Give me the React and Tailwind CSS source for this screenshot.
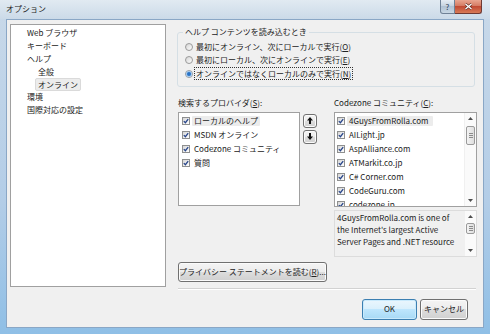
import React from 'react';

const btn = "border border-[#707070] rounded-[3px] bg-[linear-gradient(to_bottom,#f4f4f4_0%,#ececec_50%,#dddddd_50%,#d0d0d0_100%)] shadow-[inset_0_0_0_1px_#fbfbfb] flex items-center justify-center";

const providers = ['ローカルのヘルプ', 'MSDN オンライン', 'Codezone コミュニティ', '質問'];
const community = ['4GuysFromRolla.com', 'AILight.jp', 'AspAlliance.com', 'ATMarkit.co.jp', 'C# Corner.com', 'CodeGuru.com', 'codezone.jp'];

function Check() {
  return (
    <span className="w-[8px] h-[8px] border border-[#8e8f8f] bg-[linear-gradient(135deg,#d6d6d6,#ffffff)] flex items-center justify-center shrink-0">
      <svg width="6" height="6" viewBox="0 0 6 6">
        <path d="M0.8 3.1 L2.4 4.7 L5.2 1.1" stroke="#27458a" strokeWidth="1.3" fill="none" />
      </svg>
    </span>
  );
}

function Radio({ on }) {
  return (
    <span className="w-[8px] h-[8px] rounded-full border border-[#9a9a9a] bg-[linear-gradient(135deg,#d4d4d4,#ffffff)] flex items-center justify-center shrink-0">
      {on && <span className="w-[4px] h-[4px] rounded-full bg-[#2a73c6] shadow-[0_0_1px_1px_#9cc6ee]" />}
    </span>
  );
}

function Arrow({ up }) {
  return (
    <svg width="5" height="3" viewBox="0 0 5 3">
      <path d={up ? 'M0 3 L2.5 0 L5 3 Z' : 'M0 0 L2.5 3 L5 0 Z'} fill="#4d4d4d" />
    </svg>
  );
}

function ScrollBar({ thumbTop, thumbH }) {
  return (
    <div className="w-[12px] h-full flex flex-col items-center bg-[#fafafa] border-l border-[#f0f0f0] shrink-0">
      <div className="h-[11px] flex items-center justify-center"><Arrow up /></div>
      <div className="flex-1 w-full px-[1px]" style={{ paddingTop: thumbTop }}>
        <div className="w-full border border-[#9a9a9a] rounded-[2px] bg-[linear-gradient(to_right,#f3f3f3,#dedede)] flex flex-col items-center justify-center gap-[1px]" style={{ height: thumbH }}>
          <span className="w-[4px] h-px bg-[#8a8a8a]" />
          <span className="w-[4px] h-px bg-[#8a8a8a]" />
          <span className="w-[4px] h-px bg-[#8a8a8a]" />
        </div>
      </div>
      <div className="h-[11px] flex items-center justify-center"><Arrow /></div>
    </div>
  );
}

function MoveBtn({ up }) {
  return (
    <div className={`${btn} w-[14px] h-[14px]`}>
      <svg width="6" height="7" viewBox="0 0 6 7">
        {up
          ? <path d="M3 0 L6 3.5 L4 3.5 L4 7 L2 7 L2 3.5 L0 3.5 Z" fill="#111" />
          : <path d="M3 7 L6 3.5 L4 3.5 L4 0 L2 0 L2 3.5 L0 3.5 Z" fill="#111" />}
      </svg>
    </div>
  );
}

export default function App() {
  const tree = [
    { label: 'Web ブラウザ', pad: 'w-[14px]' },
    { label: 'キーボード', pad: 'w-[14px]' },
    { label: 'ヘルプ', pad: 'w-[14px]' },
    { label: '全般', pad: 'w-[25px]' },
    { label: 'オンライン', pad: 'w-[25px]', selected: true },
    { label: '環境', pad: 'w-[14px]' },
    { label: '国際対応の設定', pad: 'w-[14px]' },
  ];

  return (
    <div className="w-[490px] h-[334px] flex flex-col overflow-hidden bg-[linear-gradient(to_bottom,#c9d9e9,#b3cde7_60%,#8fbfe6)] font-['Noto_Sans_CJK_JP','Noto_Sans',sans-serif] text-[8px] leading-[12px] text-[#222]">
      {/* Title bar */}
      <div className="h-[19px] flex items-start bg-[linear-gradient(to_bottom,#e1eaf2,#cbdae8)] shrink-0">
        <span className="ml-[6px] mt-[3px] text-[#1a1a1a]">オプション</span>
        <div className="ml-auto mr-[8px] flex">
          <div className="w-[15px] h-[14px] border border-[#6f8196] border-t-0 rounded-bl-[3px] bg-[linear-gradient(to_bottom,#e6edf4,#c3d1df_50%,#b0c2d4_50%,#c8d7e4)] flex items-center justify-center text-[8px] text-[#2c3e55]">?</div>
          <div className="w-[27px] h-[14px] border border-[#6f3a33] border-t-0 border-l-0 rounded-br-[3px] bg-[linear-gradient(to_bottom,#e9a590,#d3765e_50%,#c24a33_50%,#d77a57)] flex items-center justify-center">
            <svg width="9" height="7" viewBox="0 0 9 7">
              <path d="M1.5 1 L7.5 6 M7.5 1 L1.5 6" stroke="#5a2a22" strokeWidth="2.6" />
              <path d="M1.5 1 L7.5 6 M7.5 1 L1.5 6" stroke="#ffffff" strokeWidth="1.4" />
            </svg>
          </div>
        </div>
      </div>

      {/* Client area */}
      <div className="flex-1 mx-[6px] mb-[6px] bg-[#f0f0f0] border border-[#8aa7c6] flex flex-col">
        <div className="flex pl-[3px] pt-[4px]">
          {/* Tree */}
          <div className="w-[156px] h-[263px] bg-white border border-[#a0a0a0] pt-[1.5px] shrink-0">
            {tree.map((t) => (
              <div key={t.label} className="h-[12.8px] flex items-center">
                <span className={`${t.pad} shrink-0`} />
                <span className={`px-[2px] leading-[11px] rounded-[2px] whitespace-nowrap ${t.selected ? 'bg-[#ececec] border border-[#dadada] -ml-px' : ''}`}>{t.label}</span>
              </div>
            ))}
          </div>

          {/* Right panel */}
          <div className="ml-[11px] w-[300px] flex flex-col">
            <fieldset className="mt-[2px] w-[298px] border border-[#d5dfe5] rounded-[3px] pl-[7px] pt-[2px] pb-[5px]">
              <legend className="px-[2px] -ml-[2px] leading-[12px]">ヘルプ コンテンツを読み込むとき</legend>
              <div className="h-[13.5px] flex items-center gap-[2px]">
                <Radio />
                <span className="px-px">最初にオンライン、次にローカルで実行(<span className="underline">O</span>)</span>
              </div>
              <div className="h-[13.5px] flex items-center gap-[2px]">
                <Radio />
                <span className="px-px">最初にローカル、次にオンラインで実行(<span className="underline">E</span>)</span>
              </div>
              <div className="h-[13.5px] flex items-center gap-[1px]">
                <Radio on />
                <span className="px-px leading-[11px] border border-dotted border-[#333]">オンラインではなくローカルのみで実行(<span className="underline">N</span>)</span>
              </div>
            </fieldset>

            <div className="flex mt-[10px]">
              {/* Providers */}
              <div className="ml-[1px] w-[122px] flex flex-col">
                <span className="h-[12px]">検索するプロバイダ(<span className="underline">S</span>):</span>
                <div className="mt-[3px] h-[94px] bg-white border border-[#a0a0a0] pl-[3px] pt-px">
                  {providers.map((p, i) => (
                    <div key={p} className="h-[14px] flex items-center gap-[2px]">
                      <Check />
                      <span className={`px-[2px] leading-[10px] rounded-[1px] ${i === 0 ? 'bg-[#ececec]' : ''}`}>{p}</span>
                    </div>
                  ))}
                </div>
              </div>

              <div className="ml-[3px] pt-[17px] flex flex-col gap-[2px]">
                <MoveBtn up />
                <MoveBtn />
              </div>

              {/* Community */}
              <div className="ml-[17px] w-[143px] flex flex-col">
                <span className="h-[12px] whitespace-nowrap">Codezone コミュニティ(<span className="underline">C</span>):</span>
                <div className="mt-[3px] h-[95px] bg-white border border-[#a0a0a0] flex overflow-hidden">
                  <div className="flex-1 pl-[2px] pt-px overflow-hidden">
                    {community.map((c, i) => (
                      <div key={c} className="h-[14px] flex items-center gap-[2px] whitespace-nowrap">
                        <Check />
                        <span className={`px-[2px] leading-[10px] rounded-[1px] ${i === 0 ? 'bg-[#ececec] pr-[5px]' : ''}`}>{c}</span>
                      </div>
                    ))}
                  </div>
                  <ScrollBar thumbTop={2} thumbH={19} />
                </div>
                <div className="mt-[3px] h-[47px] border border-[#dcdcdc] flex overflow-hidden">
                  <div className="flex-1 pl-[2px] pt-[1px] whitespace-nowrap overflow-hidden">
                    <div>4GuysFromRolla.com is one of</div>
                    <div>the Internet's largest Active</div>
                    <div>Server Pages and .NET resource</div>
                  </div>
                  <ScrollBar thumbTop={1} thumbH={11} />
                </div>
              </div>
            </div>

            <div className={`${btn} ml-[1px] mt-[5px] w-[149px] h-[20px]`}>
              <span>プライバシー ステートメントを読む(<span className="underline">R</span>)...</span>
            </div>

            <div className="ml-[1px] mt-[6px] w-[298px] h-px bg-[#d2d2d2] shadow-[0_1px_0_#ffffff]" />
          </div>
        </div>

        <div className="mt-[10px] flex justify-end pr-[15px] gap-[3px]">
          <div className="w-[55px] h-[21px] border border-[#3c7fb1] rounded-[3px] bg-[linear-gradient(to_bottom,#eaf6fd_0%,#d9f0fc_50%,#bee6fd_50%,#a7d9f5_100%)] shadow-[inset_0_0_0_1px_#c9eafc] flex items-center justify-center">OK</div>
          <div className={`${btn} w-[48px] h-[21px]`}>キャンセル</div>
        </div>
      </div>
    </div>
  );
}
